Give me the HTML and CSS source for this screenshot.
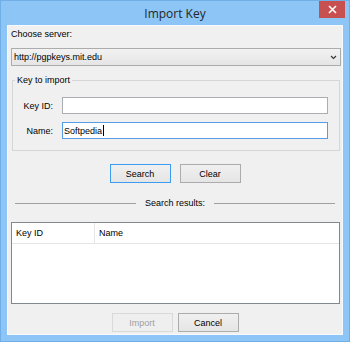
FILE: index.html
```html
<!DOCTYPE html>
<html lang="en">
<head>
<meta charset="UTF-8">
<title>Import Key</title>
<link rel="stylesheet" href="styles.css">
</head>
<body>
<div class="window">
  <div class="titlebar">
    <span class="title">Import Key</span>
    <button class="close">
      <svg width="9" height="9" viewBox="0 0 9 9"><path d="M1 1 L8 8 M8 1 L1 8" stroke="#fff" stroke-width="1.6"/></svg>
    </button>
  </div>
  <div class="client">
    <label class="server-label">Choose server:</label>
    <div class="combo">
      <span>http://pgpkeys.mit.edu</span>
      <svg class="arrow" width="7" height="5" viewBox="0 0 7 5"><path d="M1 1 L3.5 3.5 L6 1" stroke="#333" stroke-width="1.1" fill="none"/></svg>
    </div>
    <fieldset class="group">
      <legend>Key to import</legend>
      <div class="row">
        <label>Key ID:</label>
        <div class="field"></div>
      </div>
      <div class="row">
        <label>Name:</label>
        <div class="field focused">Softpedia<span class="caret"></span></div>
      </div>
    </fieldset>
    <div class="buttons search-buttons">
      <button class="btn default">Search</button>
      <button class="btn">Clear</button>
    </div>
    <div class="separator"><span>Search results:</span></div>
    <div class="list">
      <div class="list-header">
        <div class="col col-id">Key ID</div>
        <div class="col col-name">Name</div>
      </div>
    </div>
    <div class="buttons bottom-buttons">
      <button class="btn" disabled>Import</button>
      <button class="btn">Cancel</button>
    </div>
  </div>
</div>
</body>
</html>
```

FILE: styles.css
```css
body {
  margin: 0;
  padding: 0;
  font-family: "Liberation Sans", Arial, sans-serif;
  font-size: 9px;
  color: #000;
}

.window {
  width: 350px;
  height: 342px;
  box-sizing: border-box;
  border: 1px solid #72aee6;
  background-color: #8cc5f6;
  padding: 0 6px 6px;
  display: flex;
  flex-direction: column;
}

.titlebar {
  height: 24px;
  position: relative;
  display: flex;
  justify-content: center;
  align-items: center;
}

.title {
  font-family: "Open Sans", sans-serif;
  font-size: 12px;
  color: #262626;
  margin-top: 1px;
}

.close {
  position: absolute;
  top: 0;
  right: -2px;
  width: 26px;
  height: 17px;
  border: none;
  padding: 0;
  background-color: #c75050;
  display: flex;
  justify-content: center;
  align-items: center;
}

.client {
  flex: 1;
  border: 1px solid #f8fbfe;
  background-color: #f0f0f0;
  display: flex;
  flex-direction: column;
}

.server-label {
  line-height: 11px;
  margin: 3px 0 0 3px;
}

.combo {
  margin: 8px 1px 0 3px;
  height: 18px;
  box-sizing: border-box;
  border: 1px solid #acacac;
  background: linear-gradient(#f2f2f2, #e5e5e5);
  display: flex;
  align-items: center;
  justify-content: space-between;
  padding: 0 3px 0 2px;
}

.group {
  margin: 9px 2px 0 4px;
  padding: 11px 11px 11px 0;
  border: 1px solid #d6d6d6;
  min-width: 0;
  display: flex;
  flex-direction: column;
  gap: 8px;
}

.group legend {
  line-height: 11px;
  padding: 0 2px;
  margin-left: 2px;
}

.row {
  display: flex;
  align-items: center;
}

.row label {
  width: 40px;
  text-align: right;
  margin-right: 9px;
}

.field {
  flex: 1;
  height: 17px;
  box-sizing: border-box;
  border: 1px solid #abadb3;
  background-color: #fff;
  padding-left: 1px;
  display: flex;
  align-items: center;
}

.field.focused {
  border-color: #569de5;
}

.caret {
  width: 1px;
  height: 11px;
  background-color: #000;
  margin-left: 1px;
}

.buttons {
  display: flex;
  justify-content: center;
}

.search-buttons {
  margin-top: 13px;
  gap: 9px;
}

.bottom-buttons {
  margin-top: 9px;
  gap: 5px;
}

.btn {
  width: 61px;
  height: 19px;
  padding: 0;
  font-family: "Liberation Sans", Arial, sans-serif;
  font-size: 9px;
  color: #000;
  border: 1px solid #acacac;
  background: linear-gradient(#f0f0f0, #e5e5e5);
}

.btn.default {
  border-color: #3c9cf0;
}

.btn:disabled {
  border-color: #d9d9d9;
  background: #efefef;
  color: #a0a0a0;
}

.separator {
  margin: 15px 7px 0;
  line-height: 11px;
  display: flex;
  align-items: center;
  gap: 9px;
}

.separator::before,
.separator::after {
  content: "";
  flex: 1;
  height: 1px;
  background-color: #a0a0a0;
}

.list {
  margin: 13px 2px 0 3px;
  height: 82px;
  box-sizing: border-box;
  border: 1px solid #828790;
  background-color: #fff;
}

.list-header {
  display: flex;
  height: 20px;
  border-bottom: 1px solid #e5e5e5;
}

.col {
  display: flex;
  align-items: center;
  padding-left: 4px;
}

.col-id {
  width: 78px;
  border-right: 1px solid #e5e5e5;
}

.col-name {
  flex: 1;
}
```
